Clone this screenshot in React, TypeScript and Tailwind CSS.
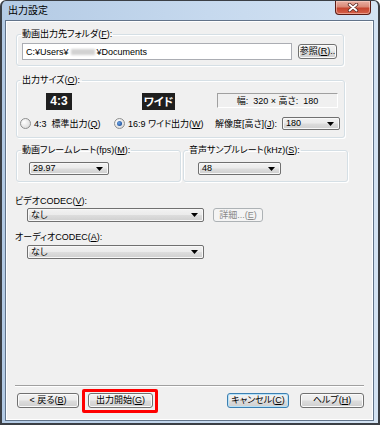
import React from "react";

const btnBg =
  "bg-[linear-gradient(#f2f2f2_0%,#ebebeb_48%,#dddddd_52%,#cfcfcf_100%)]";

function U({ c }: { c: string }) {
  return <span className="underline underline-offset-[1px]">{c}</span>;
}

function Arrow() {
  return (
    <svg width="7" height="4" viewBox="0 0 7 4" className="shrink-0">
      <path d="M0 0 H7 L3.5 4 Z" fill="#000" />
    </svg>
  );
}

function Select({ w, h = 13, value }: { w: string; h?: number; value: string }) {
  return (
    <div
      className={`${w} ${h === 14 ? "h-[14px]" : "h-[13px]"} flex items-center justify-between rounded-[2px] border border-[#707070] ${btnBg} pl-[3px] pr-[5px] shadow-[inset_0_0_0_1px_#f8f8f8]`}
    >
      <span className="leading-[11px]">{value}</span>
      <Arrow />
    </div>
  );
}

function Button({
  w,
  children,
  focused,
}: {
  w: string;
  children: React.ReactNode;
  focused?: boolean;
}) {
  return (
    <div
      className={`${w} h-[15px] flex items-center justify-center whitespace-nowrap rounded-[3px] border ${
        focused
          ? "border-[#3c7fb1] shadow-[inset_0_0_0_1px_#b7e2f8]"
          : "border-[#707070] shadow-[inset_0_0_0_1px_#fbfbfb]"
      } ${btnBg} leading-[11px]`}
    >
      {children}
    </div>
  );
}

function Radio({ checked }: { checked?: boolean }) {
  return (
    <span className="w-[11px] h-[11px] shrink-0 rounded-full border border-[#8e8f8f] bg-[radial-gradient(circle_at_35%_35%,#ffffff,#e0e0e0_70%,#cfcfcf)] flex items-center justify-center">
      {checked && (
        <span className="w-[5px] h-[5px] rounded-full bg-[radial-gradient(circle_at_40%_40%,#6fa6e4,#1d4f9b_75%)]" />
      )}
    </span>
  );
}

function CloseButton() {
  return (
    <div className="mr-[3px] w-[36px] h-[14px] rounded-b-[4px] border border-t-0 border-[#5b1c14] bg-[linear-gradient(#e9b0a3_0%,#d98876_45%,#c6452f_55%,#d5624b_100%)] flex items-center justify-center shadow-[inset_0_0_0_1px_rgba(255,220,210,0.5)]">
      <svg width="12" height="9" viewBox="0 0 12 9">
        <path d="M2.5 1.5 L9.5 7.5 M9.5 1.5 L2.5 7.5" stroke="#5a2b25" strokeWidth="3.4" strokeLinecap="round" />
        <path d="M2.5 1.5 L9.5 7.5 M9.5 1.5 L2.5 7.5" stroke="#ffffff" strokeWidth="1.8" strokeLinecap="round" />
      </svg>
    </div>
  );
}

const gb =
  "rounded-[3px] border border-[#d5dfe5] shadow-[inset_1px_1px_0_#ffffff,1px_1px_0_#ffffff]";

export default function App() {
  return (
    <div className="w-[380px] h-[425px] overflow-hidden whitespace-nowrap bg-white font-['Liberation_Sans','Noto_Sans_CJK_JP',sans-serif] text-[9px] leading-[12px] text-black [font-feature-settings:'palt']">
      <div className="w-full h-full flex flex-col rounded-t-[6px] border-x-2 border-b-2 border-t border-[#3b3f45] bg-[linear-gradient(90deg,#b3cae4,#c6d9ee_55%,#d4e3f3)] pl-[3px] pr-[4px] pb-[2px]">
        {/* title bar */}
        <div className="h-[19px] shrink-0 flex items-start justify-between">
          <span className="pl-[3px] pt-[4px] text-[10px] leading-[12px]">出力設定</span>
          <CloseButton />
        </div>
        {/* client */}
        <div className="flex-1 flex flex-col border border-[#62748a]">
          <div className="flex-1 flex flex-col border border-white bg-[#f0f0f0]">
            {/* Group 1 */}
            <fieldset className={`ml-[9px] mt-[6px] w-[328px] pl-[4px] pt-[3px] pb-[5px] ${gb}`}>
              <legend className="px-[1px] leading-[12px]">
                動画出力先フォルダ(<U c="F" />):
              </legend>
              <div className="flex items-start">
                <div className="ml-[1px] w-[270px] h-[17px] border border-[#abadb3] bg-white flex items-center pl-[3px]">
                  <span>C:¥Users¥</span>
                  <span className="inline-block w-[24px] h-[6px] mx-[2px] bg-[#d2d2d2] blur-[1px]" />
                  <span>¥Documents</span>
                </div>
                <div className="ml-[6px] mt-[1px]">
                  <Button w="w-[39px]">
                    参照(<U c="R" />)..
                  </Button>
                </div>
              </div>
            </fieldset>

            {/* Group 2 */}
            <fieldset className={`ml-[9px] mt-[8px] w-[329px] pl-[3px] pt-[7px] pb-[7px] ${gb}`}>
              <legend className="px-[2px] leading-[12px]">
                出力サイズ(<U c="O" />):
              </legend>
              <div className="flex items-start h-[17px]">
                <div className="ml-[26px] w-[26px] h-[17px] bg-[#1f1f1f] text-white font-bold text-[12px] leading-[17px] text-center">
                  4:3
                </div>
                <div className="ml-[70px] w-[33px] h-[17px] bg-[#1f1f1f] text-white font-bold text-[11px] leading-[17px] text-center font-['Noto_Sans_CJK_JP',sans-serif]">
                  ワイド
                </div>
                <div className="ml-[42px] w-[121px] h-[15px] border-t border-l border-[#a0a0a0] border-r border-b border-r-white border-b-white flex items-center justify-center">
                  幅:&nbsp; 320 × 高さ:&nbsp; 180
                </div>
              </div>
              <div className="mt-[7px] flex items-center h-[13px]">
                <div className="w-[94px] flex items-center">
                  <Radio />
                  <span className="ml-[3px]">
                    4:3&nbsp; 標準出力(<U c="Q" />)
                  </span>
                </div>
                <div className="w-[101px] flex items-center">
                  <Radio checked />
                  <span className="ml-[3px]">
                    16:9 ワイド出力(<U c="W" />)
                  </span>
                </div>
                <div className="w-[67px]">
                  解像度[高さ](<U c="J" />):
                </div>
                <Select w="w-[58px]" value="180" />
              </div>
            </fieldset>

            {/* Group 3 & 4 */}
            <div className="ml-[9px] mt-[6px] flex gap-[2px]">
              <fieldset className={`w-[165px] pl-[4px] pt-[6px] pb-[6px] ${gb}`}>
                <legend className="px-[1px] leading-[12px]">
                  動画フレームレート(fps)(<U c="M" />):
                </legend>
                <div className="ml-[8px]">
                  <Select w="w-[80px]" value="29.97" />
                </div>
              </fieldset>
              <fieldset className={`w-[165px] pl-[4px] pt-[6px] pb-[6px] ${gb}`}>
                <legend className="px-[1px] leading-[12px]">
                  音声サンプルレート(kHz)(<U c="S" />):
                </legend>
                <div className="ml-[10px]">
                  <Select w="w-[83px]" value="48" />
                </div>
              </fieldset>
            </div>

            {/* CODEC */}
            <div className="ml-[8px] mt-[13px]">
              ビデオCODEC(<U c="V" />):
            </div>
            <div className="ml-[20px] mt-[1px] flex items-center">
              <Select w="w-[177px]" h={14} value="なし" />
              <div className="ml-[9px] w-[50px] h-[14px] rounded-[3px] border border-[#adb2b5] bg-[#f4f4f4] text-[#8a8a8a] flex items-center justify-center leading-[11px]">
                詳細...(<U c="E" />)
              </div>
            </div>
            <div className="ml-[8px] mt-[9px]">
              オーディオCODEC(<U c="A" />):
            </div>
            <div className="ml-[20px] mt-[2px]">
              <Select w="w-[177px]" h={14} value="なし" />
            </div>

            <div className="flex-1" />

            {/* separator */}
            <div className="ml-[8px] w-[349px] h-[2px] border-t border-[#a0a0a0] border-b border-b-white" />

            {/* buttons */}
            <div className="mt-[6px] mb-[11px] flex items-center">
              <div className="ml-[10px]">
                <Button w="w-[62px]">
                  &lt; 戻る(<U c="B" />)
                </Button>
              </div>
              <div className="ml-[9px] relative">
                <Button w="w-[65px]">
                  出力開始(<U c="G" />)
                </Button>
                <span className="absolute -left-[6px] -right-[5px] -top-[4px] -bottom-[5px] border-[3px] border-[#ff0000] rounded-[2px]" />
              </div>
              <div className="ml-[74px]">
                <Button w="w-[62px]" focused>
                  キャンセル(<U c="C" />)
                </Button>
              </div>
              <div className="ml-[11px]">
                <Button w="w-[64px]">
                  ヘルプ(<U c="H" />)
                </Button>
              </div>
            </div>
          </div>
        </div>
      </div>
    </div>
  );
}
